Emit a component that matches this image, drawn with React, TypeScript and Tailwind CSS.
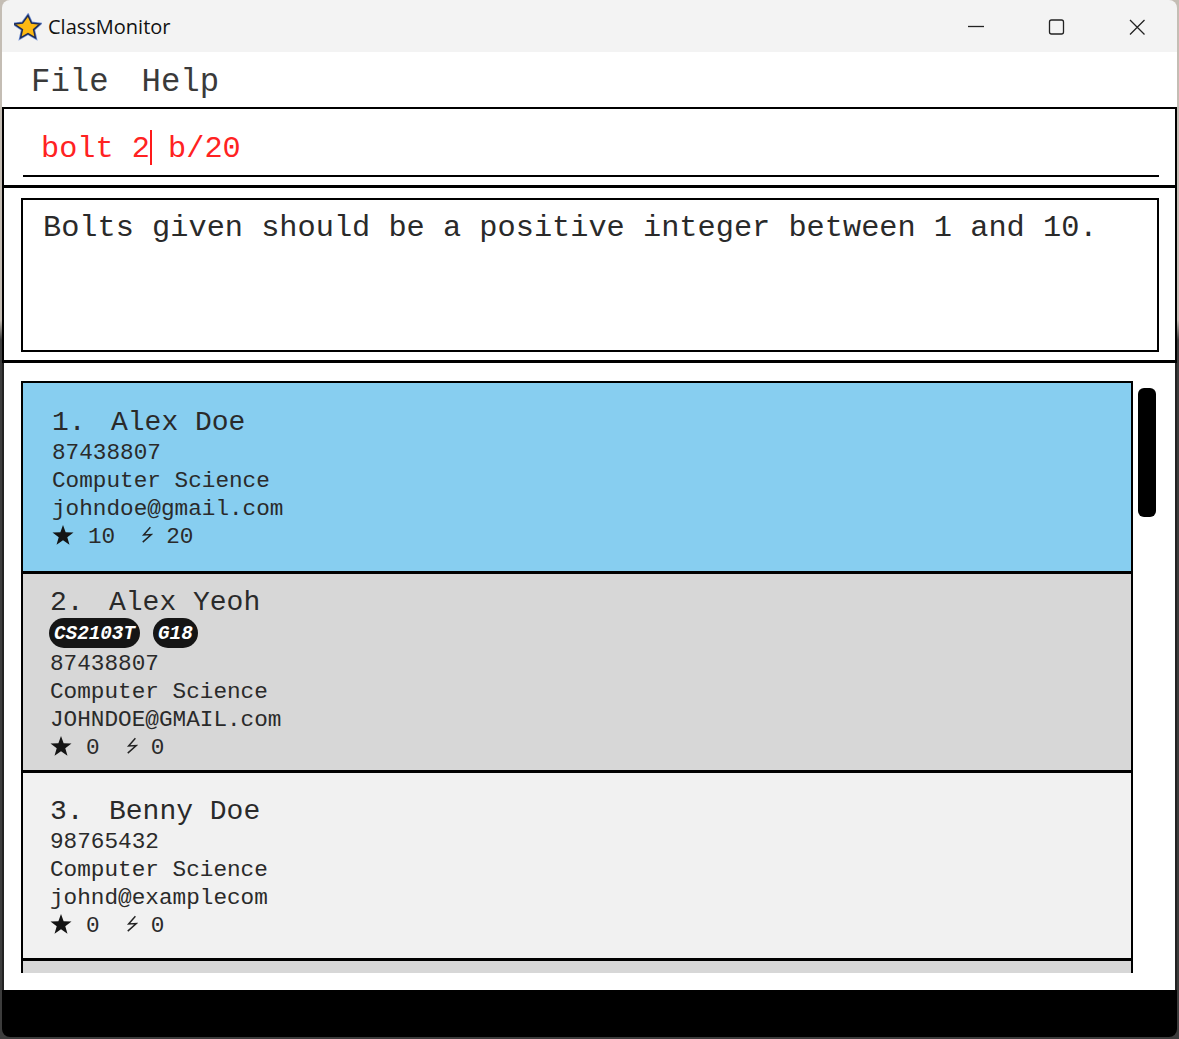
const mono = "font-['Liberation_Mono','Courier_New',monospace]";

type Student = {
  index: number;
  name: string;
  tags: string[];
  phone: string;
  major: string;
  email: string;
  stars: number;
  bolts: number;
  cardClass: string;
};

const students: Student[] = [
  {
    index: 1,
    name: "Alex Doe",
    tags: [],
    phone: "87438807",
    major: "Computer Science",
    email: "johndoe@gmail.com",
    stars: 10,
    bolts: 20,
    cardClass: "h-[191px] bg-[#87cef0] pt-[24px] pl-[29px]",
  },
  {
    index: 2,
    name: "Alex Yeoh",
    tags: ["CS2103T", "G18"],
    phone: "87438807",
    major: "Computer Science",
    email: "JOHNDOE@GMAIL.com",
    stars: 0,
    bolts: 0,
    cardClass: "h-[199px] bg-[#d7d7d7] pt-[13px] pl-[27px]",
  },
  {
    index: 3,
    name: "Benny Doe",
    tags: [],
    phone: "98765432",
    major: "Computer Science",
    email: "johnd@examplecom",
    stars: 0,
    bolts: 0,
    cardClass: "h-[188px] bg-[#f1f1f1] pt-[23px] pl-[27px]",
  },
];

function StarIcon() {
  return (
    <svg viewBox="0 0 24 24" className="mb-[6px] h-[21px] w-[22px] shrink-0 fill-[#141414]">
      <path d="M12 1l3 8.4 9 .3-7.1 5.4 2.5 8.6L12 18.6l-7.4 5.1 2.5-8.6L0 9.7l9-.3z" />
    </svg>
  );
}

function BoltIcon() {
  return (
    <svg viewBox="0 0 14 20" className="mb-[6px] h-[17px] w-[12px] shrink-0 fill-none stroke-[#222] stroke-[1.7]">
      <path d="M11 1.500 3 10.500l9-.5-10 9" />
    </svg>
  );
}

function AppIcon() {
  const star = "M14 2.5l3.5 7.6 8.3.9-6.2 5.6 1.8 8.2-7.4-4.3-7.4 4.3 1.8-8.2L.2 11l8.3-.9z";
  return (
    <svg viewBox="0 0 28 28" className="h-[28px] w-[28px]">
      <path d={star} className="fill-none stroke-[#6f8fd8] stroke-[3]" />
      <path d={star} className="fill-[#fdb913] stroke-[#1f2c55] stroke-[1.5]" />
    </svg>
  );
}

function StudentCard({ student }: { student: Student }) {
  return (
    <div className={`shrink-0 border-x-2 border-b-[3px] border-black text-[#2a2a2a] ${student.cardClass}`}>
      <div className="flex h-[32px] items-center text-[28px] leading-none whitespace-pre">
        <span className="w-[59px]">{student.index}.</span>
        <span>{student.name}</span>
      </div>
      {student.tags.length > 0 && (
        <div className="-mt-[2px] mb-[1px] -ml-[1px] flex h-[32px] items-center gap-[13px]">
          {student.tags.map((tag) => (
            <span
              key={tag}
              className="flex h-[30px] items-center rounded-[15px] bg-[#151515] px-[5px] pt-[2px] text-[19.3px] font-bold text-white italic"
            >
              {tag}
            </span>
          ))}
        </div>
      )}
      <div className="text-[22.7px] leading-[28px]">{student.phone}</div>
      <div className="text-[22.7px] leading-[28px]">{student.major}</div>
      <div className="text-[22.7px] leading-[28px]">{student.email}</div>
      <div className="flex h-[28px] items-center text-[22.7px]">
        <StarIcon />
        <span className="ml-[14px]">{student.stars}</span>
        <span className="ml-[26px]">
          <BoltIcon />
        </span>
        <span className="ml-[13px]">{student.bolts}</span>
      </div>
    </div>
  );
}

export default function App() {
  return (
    <div className="flex h-[1039px] w-[1179px] flex-col overflow-hidden bg-[linear-gradient(#c4bdb4_0,#c4bdb4_320px,#3c3c3c_340px)] px-[2px] pb-[2px]">
      <div className="flex h-[52px] shrink-0 items-center rounded-t-[8px] bg-[#f3f3f3] pt-[2px] pl-[12px]">
        <AppIcon />
        <span className="ml-[6px] font-['Open_Sans',sans-serif] text-[20px] text-[#111]">ClassMonitor</span>
        <div className="ml-auto flex items-center">
          <svg viewBox="0 0 240 20" className="h-[20px] w-[240px] fill-none stroke-[#222] stroke-[1.3]">
            <path d="M31 9.5h16" />
            <rect x="112.5" y="3" width="14" height="14" rx="2" />
            <path d="M193 3l14.500 14.500M207.500 3l-14.500 14.500" />
          </svg>
        </div>
      </div>

      <div className={`flex h-[55px] shrink-0 items-center gap-[33px] bg-white pt-[8px] pl-[29px] text-[32.3px] text-[#3a3a3a] ${mono}`}>
        <span>File</span>
        <span>Help</span>
      </div>

      <div className="h-[81px] shrink-0 border-x-2 border-t-2 border-b-[3px] border-black bg-white pr-[16px] pl-[19px]">
        <div className={`flex h-[68px] items-end border-b-2 border-black pb-[8px] pl-[18px] text-[30.25px] leading-[36px] whitespace-pre text-[#ff2222] ${mono}`}>
          <span>bolt 2</span>
          <span className="mb-[2px] h-[35px] w-[2px] bg-[#ff1a1a]" />
          <span className="-ml-[2px]"> b/20</span>
        </div>
      </div>

      <div className="h-[175px] shrink-0 border-x-2 border-b-[3px] border-black bg-white pt-[10px] pr-[16px] pl-[17px]">
        <div className={`h-[154px] border-2 border-black px-[20px] pt-[10px] text-[30.3px] leading-[36px] whitespace-nowrap text-[#2a2a2a] ${mono}`}>
          Bolts given should be a positive integer between 1 and 10.
        </div>
      </div>

      <div className={`flex h-[627px] shrink-0 border-x-2 border-[#222] bg-white pt-[18px] pb-[17px] pl-[17px] ${mono}`}>
        <div className="flex w-[1112px] flex-col overflow-hidden">
          <div className="h-[2px] shrink-0 bg-black" />
          {students.map((student) => (
            <StudentCard key={student.index} student={student} />
          ))}
          <div className="h-[40px] shrink-0 border-x-2 border-black bg-[#d7d7d7]" />
        </div>
        <div className="mt-[7px] ml-[5px] h-[129px] w-[18px] rounded-[6px] bg-black" />
      </div>

      <div className="flex-1 rounded-b-[8px] bg-black" />
    </div>
  );
}
